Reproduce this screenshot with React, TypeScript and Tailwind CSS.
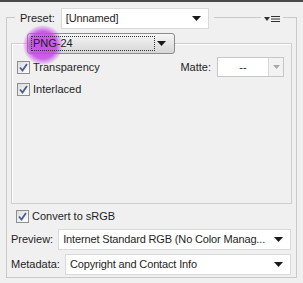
import React from 'react';

const font = { fontFamily: '"Liberation Sans", Arial, sans-serif' };

const Arrow = ({ color = '#1a1a1a' }: { color?: string }) => (
  <svg width="9" height="5" viewBox="0 0 9 5">
    <path d="M0 0h9L4.5 5z" fill={color} />
  </svg>
);

const Check = ({ label }: { label: string }) => (
  <div className="flex items-center gap-[3px] h-[16px]">
    <div className="w-[13px] h-[13px] border border-[#8e8f8f] bg-gradient-to-br from-[#dcdcdc] to-white flex items-center justify-center">
      <svg width="9" height="9" viewBox="0 0 9 9">
        <path d="M1 4.5L3.5 7.5L8 1" fill="none" stroke="#4b5e8c" strokeWidth="1.8" />
      </svg>
    </div>
    <span className="text-[11px] text-[#1e1e1e]">{label}</span>
  </div>
);

const Select = ({ value, className }: { value: string; className: string }) => (
  <div className={`h-[21px] min-w-0 bg-white border border-[#dadada] flex items-center justify-between pl-[4px] pr-[7px] ${className}`}>
    <span className="text-[11px] tracking-[-0.15px] text-[#1e1e1e] whitespace-nowrap">{value}</span>
    <div className="shrink-0 ml-[4px]"><Arrow /></div>
  </div>
);

export default function App() {
  return (
    <div className="w-[303px] h-[283px] bg-[#f0f0f0] border-t-2 border-[#4a4a4a] overflow-hidden" style={font}>
      <div className="mx-[6px] mt-[15px] pb-[2px] border border-[#c9c9c9] flex flex-col">
        {/* Preset row */}
        <div className="-mt-[10px] h-[21px] flex items-center pl-[8px] pr-[13px]">
          <div className="bg-[#f0f0f0] flex items-center gap-[6px] px-[5px]">
            <span className="text-[11px] text-[#1e1e1e]">Preset:</span>
            <Select value="[Unnamed]" className="w-[148px]" />
          </div>
          <div className="ml-auto bg-[#f0f0f0] px-[3px] flex items-center gap-[1px]">
            <svg width="6" height="4" viewBox="0 0 6 4"><path d="M0 0h6L3 4z" fill="#333" /></svg>
            <svg width="9" height="8" viewBox="0 0 9 8">
              <path d="M0 1.5h9M0 4h9M0 6.5h9" stroke="#333" strokeWidth="1" />
            </svg>
          </div>
        </div>

        {/* Format group */}
        <div className="mx-[4px] mt-[14px] h-[161px] border border-[#cdcdcd] shadow-[inset_1px_1px_0_#fff] relative">
          <div className="absolute left-[15px] -top-[11px] w-[148px] h-[21px] rounded-[3px] border border-[#8c8c8c] bg-gradient-to-b from-[#f6f6f6] to-[#d6d6d6] flex items-center justify-between pl-[3px] pr-[8px]">
            <div className="absolute -left-[5px] -top-[9px] w-[40px] h-[40px] rounded-full bg-[radial-gradient(circle,rgba(196,70,230,0.95)_0%,rgba(196,70,230,0.85)_48%,rgba(196,70,230,0)_72%)] pointer-events-none" />
            <div className="relative border border-dotted border-[#333] h-[15px] w-[124px] flex items-center pl-[1px]">
              <span className="text-[11px] text-[#1e1e1e]">PNG-24</span>
            </div>
            <div className="relative"><Arrow /></div>
          </div>

          <div className="pt-[13px] pl-[5px] pr-[7px] flex flex-col gap-[4px]">
            <div className="flex items-center justify-between">
              <Check label="Transparency" />
              <div className="flex items-center gap-[6px]">
                <span className="text-[11px] text-[#1e1e1e]">Matte:</span>
                <div className="w-[67px] h-[20px] border border-[#c6c6c6] bg-white flex">
                  <div className="flex-1 flex items-center justify-center text-[11px] text-[#1e1e1e]">--</div>
                  <div className="w-[15px] border-l border-[#d8d8d8] bg-[#f2f2f2] flex items-center justify-center">
                    <svg width="7" height="4" viewBox="0 0 7 4"><path d="M0 0h7L3.5 4z" fill="#a8a8a8" /></svg>
                  </div>
                </div>
              </div>
            </div>
            <Check label="Interlaced" />
          </div>
        </div>

        {/* Bottom */}
        <div className="pl-[9px] mt-[4px]">
          <Check label="Convert to sRGB" />
        </div>
        <div className="mt-[5px] flex items-center gap-[5px] pl-[4px] pr-[5px]">
          <span className="text-[11px] text-[#1e1e1e]">Preview:</span>
          <Select value="Internet Standard RGB (No Color Manag..." className="flex-1" />
        </div>
        <div className="mt-[4px] flex items-center gap-[5px] pl-[4px] pr-[5px]">
          <span className="text-[11px] text-[#1e1e1e]">Metadata:</span>
          <Select value="Copyright and Contact Info" className="flex-1" />
        </div>
      </div>
    </div>
  );
}
